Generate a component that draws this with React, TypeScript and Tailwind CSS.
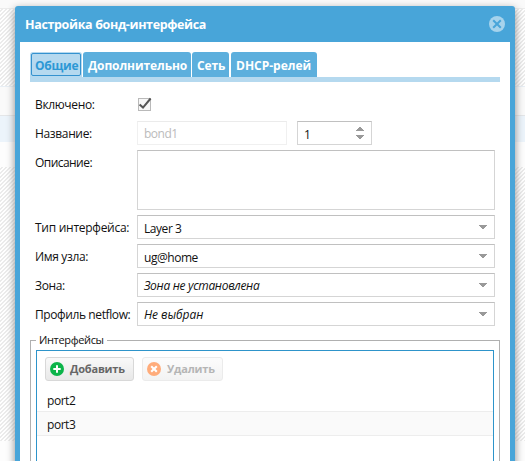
import React from "react";

const hatch =
  "bg-[repeating-linear-gradient(135deg,#ffffff_0px,#ffffff_1.4142px,#ebebeb_1.4142px,#ebebeb_2.8284px)]";

function Backdrop() {
  return (
    <div className="absolute inset-0 flex flex-col">
      <div className="h-[9px] shrink-0 border-b border-[#ececec] bg-[#fafafa]" />
      <div className={`h-[77px] shrink-0 ${hatch}`} />
      <div className="h-[30px] shrink-0 border-y border-t-[#e8eff5] border-b-[#e4e6e8] bg-[#fafafa]" />
      <div className="h-[26px] shrink-0 bg-[#ecf4fb]" />
      <div className="h-[25px] shrink-0 bg-[#fdfdfd]" />
      <div className={`h-[274px] shrink-0 ${hatch}`} />
      <div className="grow bg-[#fdfdfd]" />
    </div>
  );
}

function Tab({ className, label }: { className: string; label: string }) {
  return (
    <div
      className={`flex h-[25px] items-center whitespace-nowrap rounded-t-[3px] pt-[2px] text-[12px] font-bold leading-4 ${className}`}
    >
      {label}
    </div>
  );
}

function Label({ children, className = "tracking-[-0.35px]" }: { children: React.ReactNode; className?: string }) {
  return (
    <div className={`h-6 w-[102px] shrink-0 whitespace-nowrap pt-px text-[12px] leading-6 text-[#111] ${className}`}>
      {children}
    </div>
  );
}

const box = "border border-[#d5d5d5] border-t-[#c0c0c0] bg-white";

function Select({ label, value, labelClass, valueClass = "tracking-[-0.45px] pt-[3px]" }: { label: string; value: string; labelClass?: string; valueClass?: string }) {
  return (
    <div className="mb-[5px] flex h-6">
      <Label className={labelClass}>{label}</Label>
      <div className={`flex w-[358px] items-center justify-between pl-[6px] pr-[7px] ${box}`}>
        <span className={`whitespace-nowrap text-[12px] leading-5 text-[#111] ${valueClass}`}>{value}</span>
        <svg width="8" height="4" viewBox="0 0 8 4" shapeRendering="crispEdges">
          <path d="M0 0H8V1H7V2H6V3H5V4H3V3H2V2H1V1H0Z" fill="#999" />
        </svg>
      </div>
    </div>
  );
}

export default function App() {
  return (
    <div className="relative h-[461px] w-[525px] overflow-hidden bg-white font-['Open_Sans','Noto_Sans',sans-serif]">
      <Backdrop />
      <div className="relative ml-[15px] mt-[6px] h-[480px] w-[500px] rounded-t-[3px] bg-[#48a5d9] px-[5px] shadow-[0_3px_8px_#888]">
        <div className="flex h-9 items-center justify-between pl-[5px] pr-[5px]">
          <span className="whitespace-nowrap pt-px text-[12.5px] font-bold leading-5 tracking-[-0.35px] text-white">Настройка бонд-интерфейса</span>
          <svg width="16" height="16" viewBox="0 0 16 16">
            <circle cx="8" cy="8" r="8" fill="#a6d3ec" />
            <path d="M4.2 4.2L11.8 11.8M11.8 4.2L4.2 11.8" stroke="#48a5d9" strokeWidth="2" />
          </svg>
        </div>
        <div className="h-[444px] bg-white px-[10px] pt-[10px]">
          <div className="flex h-[30px] border-b-[5px] border-[#b5d9ef]">
            <div className="mr-px h-[25px] rounded-t-[3px] bg-[#b5d9ef] p-px">
              <Tab label="Общие" className="!h-[23px] w-[50px] !rounded-[2px] border border-[#3492cf] pl-[3px] tracking-[-0.25px] text-[#2d98d5]" />
            </div>
            <Tab label="Дополнительно" className="mr-px w-[108px] bg-[#5cafdd] pl-[5px] tracking-[-0.1px] text-white" />
            <Tab label="Сеть" className="mr-[2px] w-[37px] bg-[#5cafdd] pl-[5px] tracking-[-0.1px] text-white" />
            <Tab label="DHCP-релей" className="w-[86px] bg-[#5cafdd] pl-[5px] text-white" />
          </div>
          <div className="pl-[5px] pt-[10px]">
            <div className="mb-[5px] flex h-6">
              <Label>Включено:</Label>
              <svg width="16" height="16" viewBox="0 0 16 16" className="mt-[5px]">
                <rect x="1.5" y="1.5" width="12" height="12" fill="#f7f7f7" stroke="#b9b9b9" />
                <path d="M2.6 7.5L6 10.6L13.6 1.5" fill="none" stroke="#555" strokeWidth="2" />
              </svg>
            </div>
            <div className="mb-[5px] flex h-6">
              <Label>Название:</Label>
              <div className="mr-[10px] w-[150px] border border-[#f0f0f0] border-t-[#ebebeb] pl-[6px] pt-[2px] text-[12px] leading-5 tracking-[-0.5px] text-[#bbb]">bond1</div>
              <div className={`flex w-[75px] items-center justify-between pl-[6px] pr-[7px] ${box}`}>
                <span className="pt-[3px] text-[12px] leading-5 text-[#111]">1</span>
                <svg width="8" height="12" viewBox="0 0 8 12" shapeRendering="crispEdges">
                  <path d="M3 0H5V1H6V2H7V3H8V4H0V3H1V2H2V1H3ZM0 8H8V9H7V10H6V11H5V12H3V11H2V10H1V9H0Z" fill="#999" />
                </svg>
              </div>
            </div>
            <div className="mb-[5px] flex h-[60px]">
              <Label className="tracking-[-0.55px]">Описание:</Label>
              <div className={`w-[358px] ${box}`} />
            </div>
            <Select label="Тип интерфейса:" labelClass="tracking-[-0.27px]" value="Layer 3" />
            <Select label="Имя узла:" value="ug@home" />
            <Select label="Зона:" value="Зона не установлена" valueClass="italic tracking-[-0.32px] pt-px" />
            <Select label="Профиль netflow:" labelClass="tracking-[-0.4px]" value="Не выбран" valueClass="italic tracking-[-0.05px] pt-px" />
          </div>
          <fieldset className="mt-[7px] h-[140px] w-[470px] border border-[#b0b0b0] px-[5px]">
            <legend className="ml-0 h-[14px] whitespace-nowrap px-[3px] text-[11px] leading-[14px] tracking-[-0.35px] text-[#111]">Интерфейсы</legend>
            <div className="mt-[3px] h-[130px] border border-[#2e94ca] bg-white">
              <div className="flex h-[37px] gap-2 pl-[8px] pt-[6px]">
                <div className="flex h-6 w-[89px] items-center rounded-[3px] border border-[#d8d8d8] bg-gradient-to-b from-[#f9f9f9] to-[#e8e8e8] pl-[4px]">
                  <svg width="14" height="14" viewBox="0 0 14 14" className="mr-[6px] shrink-0">
                    <circle cx="7" cy="7" r="7" fill="#0cb44a" />
                    <path d="M3.3 7H10.7M7 3.3V10.7" stroke="white" strokeWidth="2" />
                  </svg>
                  <span className="whitespace-nowrap text-[11px] font-bold tracking-[-0.2px] text-[#666]">Добавить</span>
                </div>
                <div className="flex h-6 w-[81px] items-center rounded-[3px] border border-[#ebebeb] bg-gradient-to-b from-[#fcfcfc] to-[#f3f3f3] pl-[4px]">
                  <svg width="14" height="14" viewBox="0 0 14 14" className="mr-[6px] shrink-0">
                    <circle cx="7" cy="7" r="7" fill="#ffac7b" />
                    <path d="M4.2 4.2L9.8 9.8M9.8 4.2L4.2 9.8" stroke="white" strokeWidth="2.1" />
                  </svg>
                  <span className="whitespace-nowrap text-[11px] font-bold tracking-[-0.2px] text-[#b5b5b5]">Удалить</span>
                </div>
              </div>
              <div className="h-[24px] border-b border-[#ededed] pl-[10px] text-[12px] leading-[26px] tracking-[-0.45px] text-[#111]">port2</div>
              <div className="h-[24px] border-b border-[#ededed] bg-[#fafafa] pl-[10px] text-[12px] leading-[26px] tracking-[-0.45px] text-[#111]">port3</div>
            </div>
          </fieldset>
        </div>
      </div>
    </div>
  );
}
